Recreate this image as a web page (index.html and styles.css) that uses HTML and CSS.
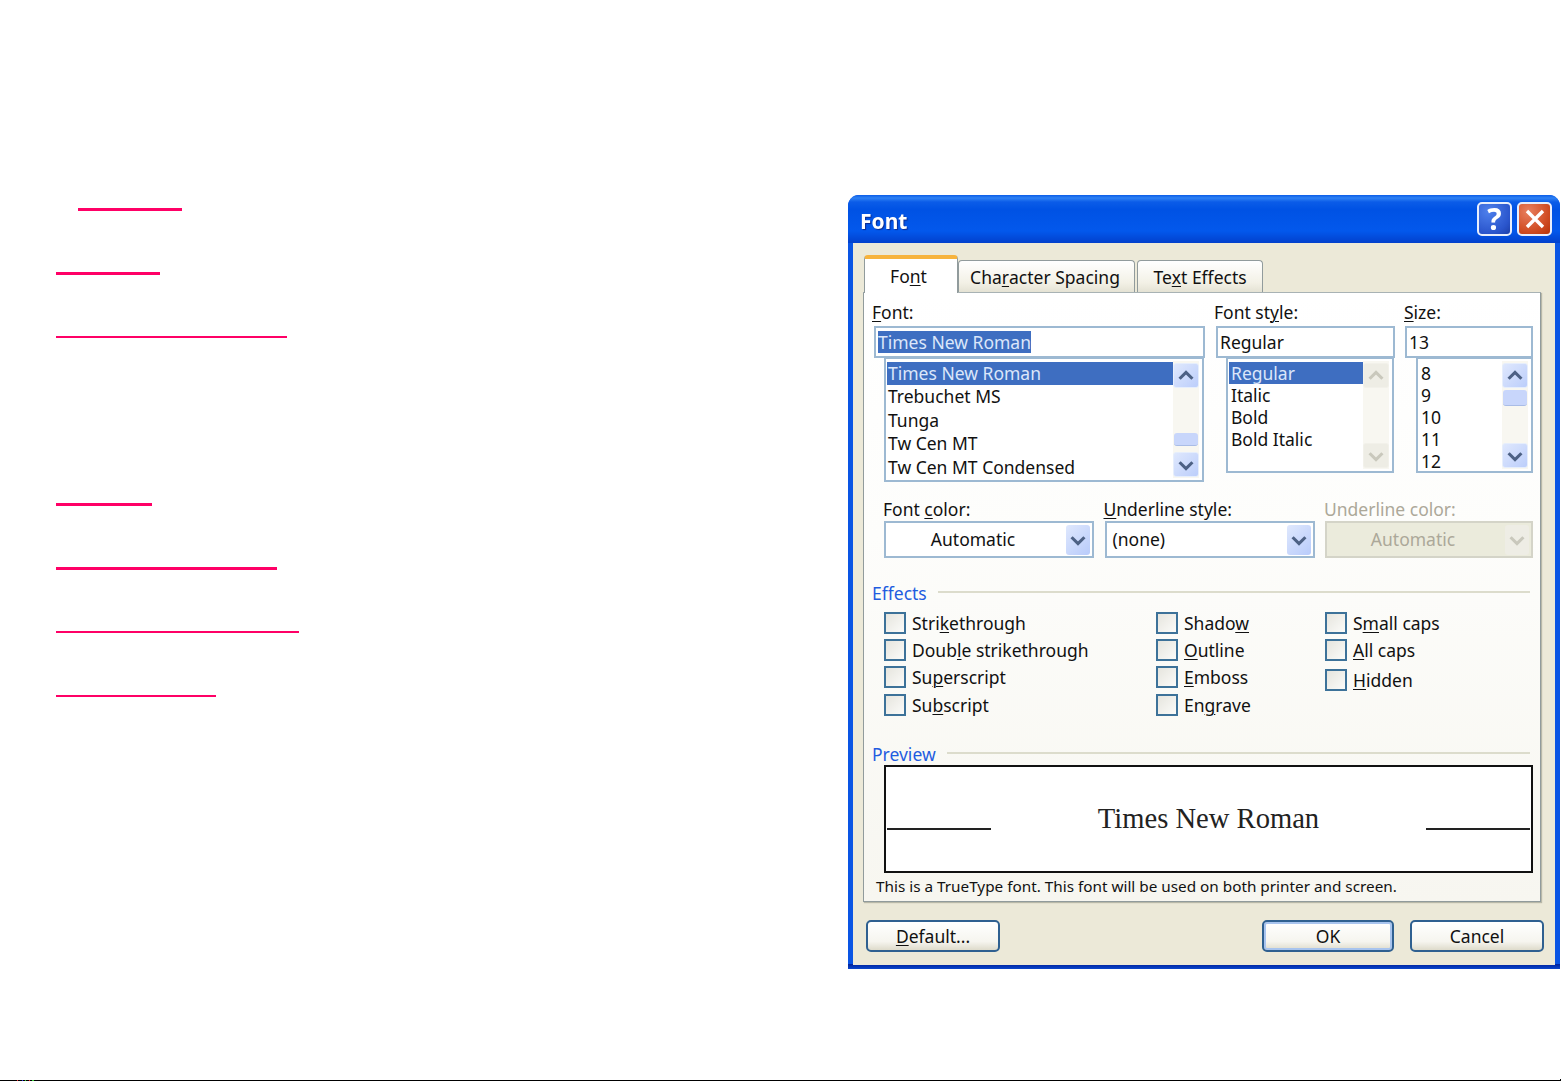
FILE: index.html
```html
<!DOCTYPE html>
<html lang="en">
<head>
<meta charset="utf-8">
<title>Font dialog</title>
<link rel="stylesheet" href="styles.css">
</head>
<body>
<svg class="defs" width="0" height="0" aria-hidden="true">
  <symbol id="up" viewBox="0 0 24 24"><path d="M5 15l7-7 7 7" fill="none" stroke="currentColor" stroke-width="3.4"/></symbol>
  <symbol id="down" viewBox="0 0 24 24"><path d="M5 9l7 7 7-7" fill="none" stroke="currentColor" stroke-width="3.4"/></symbol>
</svg>
<div class="stage">
  <div class="rules">
    <div class="rule r1"></div>
    <div class="rule r2"></div>
    <div class="rule r3"></div>
    <div class="rule r4"></div>
    <div class="rule r5"></div>
    <div class="rule r6"></div>
    <div class="rule r7"></div>
  </div>
  <div class="dialog">
    <div class="titlebar">
      <span class="title">Font</span>
      <span class="caption help">?</span>
      <span class="caption close"><svg viewBox="0 0 24 24" width="24" height="24"><path d="M4 4l16 16M20 4L4 20" stroke="#fff" stroke-width="3.4" fill="none"/></svg></span>
    </div>
    <div class="client">
      <div class="tabs">
        <div class="tab active">Fo<u>n</u>t</div>
        <div class="tab t2">Cha<u>r</u>acter Spacing</div>
        <div class="tab t3">Te<u>x</u>t Effects</div>
      </div>
      <div class="panel">
        <div class="pickers">
          <div class="col c-font">
            <div class="lbl"><u>F</u>ont:</div>
            <div class="input i-font"><span class="sel">Times New Roman</span></div>
            <div class="list l-font">
              <div class="items">
                <div class="item on">Times New Roman</div>
                <div class="item">Trebuchet MS</div>
                <div class="item">Tunga</div>
                <div class="item">Tw Cen MT</div>
                <div class="item">Tw Cen MT Condensed</div>
              </div>
              <div class="sbar">
                <div class="sb"><svg><use href="#up"/></svg></div>
                <div class="thumb th-font"></div>
                <div class="sb"><svg><use href="#down"/></svg></div>
              </div>
            </div>
          </div>
          <div class="col c-style">
            <div class="lbl">Font st<u>y</u>le:</div>
            <div class="input i-style">Regular</div>
            <div class="list l-style">
              <div class="items">
                <div class="item on">Regular</div>
                <div class="item">Italic</div>
                <div class="item">Bold</div>
                <div class="item">Bold Italic</div>
              </div>
              <div class="sbar">
                <div class="sb off"><svg><use href="#up"/></svg></div>
                <div class="sb off"><svg><use href="#down"/></svg></div>
              </div>
            </div>
          </div>
          <div class="col c-size">
            <div class="lbl"><u>S</u>ize:</div>
            <div class="input i-size">13</div>
            <div class="list l-size">
              <div class="items">
                <div class="item">8</div>
                <div class="item">9</div>
                <div class="item">10</div>
                <div class="item">11</div>
                <div class="item">12</div>
              </div>
              <div class="sbar">
                <div class="sb"><svg><use href="#up"/></svg></div>
                <div class="thumb th-size"></div>
                <div class="sb"><svg><use href="#down"/></svg></div>
              </div>
            </div>
          </div>
        </div>

        <div class="combos">
          <div class="cfield">
            <div class="lbl">Font <u>c</u>olor:</div>
            <div class="combo"><span class="cval center">Automatic</span><span class="cbtn"><svg><use href="#down"/></svg></span></div>
          </div>
          <div class="cfield">
            <div class="lbl"><u>U</u>nderline style:</div>
            <div class="combo"><span class="cval">(none)</span><span class="cbtn"><svg><use href="#down"/></svg></span></div>
          </div>
          <div class="cfield disabled">
            <div class="lbl">Underline color:</div>
            <div class="combo"><span class="cval center">Automatic</span><span class="cbtn"><svg><use href="#down"/></svg></span></div>
          </div>
        </div>

        <div class="group g-effects"><span class="gname">Effects</span><span class="gline"></span></div>
        <div class="effects">
          <div class="ecol e1">
            <div class="chk"><i></i><span>Stri<u>k</u>ethrough</span></div>
            <div class="chk"><i></i><span>Doub<u>l</u>e strikethrough</span></div>
            <div class="chk"><i></i><span>Su<u>p</u>erscript</span></div>
            <div class="chk"><i></i><span>Su<u>b</u>script</span></div>
          </div>
          <div class="ecol e2">
            <div class="chk"><i></i><span>Shado<u>w</u></span></div>
            <div class="chk"><i></i><span><u>O</u>utline</span></div>
            <div class="chk"><i></i><span><u>E</u>mboss</span></div>
            <div class="chk"><i></i><span>En<u>g</u>rave</span></div>
          </div>
          <div class="ecol e3">
            <div class="chk"><i></i><span>S<u>m</u>all caps</span></div>
            <div class="chk"><i></i><span><u>A</u>ll caps</span></div>
            <div class="chk low"><i></i><span><u>H</u>idden</span></div>
          </div>
        </div>

        <div class="group g-preview"><span class="gname">Preview</span><span class="gline"></span></div>
        <div class="preview">
          <span class="pline"></span>
          <span class="ptext">Times New Roman</span>
          <span class="pline"></span>
        </div>
        <div class="note">This is a TrueType font. This font will be used on both printer and screen.</div>
      </div>
      <div class="footer">
        <div class="btn"><u>D</u>efault...</div>
        <div class="spacer"></div>
        <div class="btn focus">OK</div>
        <div class="btn">Cancel</div>
      </div>
    </div>
  </div>
</div>
<div class="strip"></div>
</body>
</html>
```
FILE: styles.css
```css
* { box-sizing: border-box; }
html, body { margin: 0; height: 1081px; overflow: hidden; background: #fff; }
.defs { position: absolute; }
u { text-underline-offset: 2px; text-decoration-thickness: 1px; }

.stage { display: flex; height: 1080px; }
.strip {
  height: 1px; width: 1561px; position: relative;
  background: linear-gradient(90deg, #000 17px, #e33 17px 18px, #000 18px 22px, #33e 22px 23px, #000 23px 25px, #3c3 25px 26px, #000 26px 29px, #e33 29px 30px, #000 30px 32px, #3c3 32px 34px, #000 34px);
}
.strip::after { content: ""; position: absolute; right: 0; top: -1px; width: 1px; height: 1px; background: #000; }

/* pink rules */
.rules { width: 848px; padding: 208px 0 0 56px; display: flex; flex-direction: column; }
.rule { height: 3px; background: #ff0066; margin-top: 61px; }
.r1 { width: 104px; margin: 0 0 0 22px; }
.r2 { width: 104px; }
.r3 { width: 231px; height: 2px; }
.r4 { width: 96px; margin-top: 165px; }
.r5 { width: 221px; }
.r6 { width: 243px; height: 2px; margin-top: 61px; }
.r7 { width: 160px; height: 2px; margin-top: 62px; }

/* window */
.dialog {
  width: 712px; height: 774px; margin-top: 195px;
  border-radius: 11px 11px 0 0;
  background: linear-gradient(#0a55e4 769px, #00229c 769px, #0a46cc 100%);
  display: flex; flex-direction: column;
  font: 17.5px/22px "Noto Sans", "Liberation Sans", sans-serif;
  color: #111;
  filter: blur(0.5px);
}
.titlebar {
  height: 48px; flex: none; display: flex; align-items: center;
  padding: 0 8px 0 12px; gap: 5px;
  border-radius: 11px 11px 0 0;
  background: linear-gradient(#0a5ce8 0, #2f82f4 3px, #0b5ce8 7px, #0052e4 30%, #0358ec 75%, #0240cc 100%);
}
.title { flex: 1; font-size: 21px; font-weight: 700; color: #fff; text-shadow: 1px 1px 1px #0a2a90; margin-top: 3px; }
.caption {
  width: 35px; height: 34px; border: 2px solid #e8eefc; border-radius: 5px;
  display: flex; align-items: center; justify-content: center;
  color: #fff; font-size: 30px; line-height: 30px; font-weight: 700;
}
.help { background: radial-gradient(circle at 30% 25%, #4e80ec, #2a55cc 70%, #1c3ea8); }
.close { background: radial-gradient(circle at 30% 25%, #e88060, #d24f26 60%, #b83208); }

.client {
  margin: 0 5px 0 5px; height: 722px; background: #ece9d8;
  display: flex; flex-direction: column; padding: 12px 0 0 10px; flex: none;
}
.tabs { display: flex; height: 37px; align-items: flex-end; flex: none; position: relative; z-index: 1; margin-left: 1px; }
.tab {
  height: 32px; border: 1px solid #919b9c; border-bottom: 0; border-radius: 4px 4px 0 0;
  background: linear-gradient(#fff, #f3f1e6 70%, #e4e2d4);
  display: flex; align-items: center; justify-content: center;
}
.tab.active {
  width: 94px; background: #fff; border-top: 4px solid #f7b33c;
  border-bottom: 0; margin-bottom: -1px; height: 38px; padding-right: 5px;
}
.t2 { width: 177px; padding-right: 3px; }
.t3 { width: 126px; margin-left: 2px; }

.panel {
  width: 678px; height: 610px; border: 1px solid #919b9c; border-top-color: #a8b2b4;
  background: linear-gradient(#fff 0, #fdfdfb 40%, #f7f6f0 100%);
  box-shadow: 1px 1px 1px #b8b8a8;
  flex: none;
}

.pickers { display: flex; padding: 8px 0 0 8px; height: 200px; }
.col { flex: none; display: flex; flex-direction: column; }
.c-font { width: 342px; }
.c-style { width: 190px; }
.c-size { width: 129px; }
.lbl { height: 22px; margin-bottom: 3px; white-space: nowrap; }
.input {
  height: 32px; border: 2px solid #9db9d2; background: #fff; padding-left: 2px;
  display: flex; align-items: center; white-space: nowrap;
}
.i-font { width: 331px; margin-left: 2px; }
.i-style { width: 179px; margin-left: 2px; }
.i-size { width: 128px; margin-left: 1px; }
.sel { background: #3e6ec1; color: #dbe6fa; height: 22px; }

.list {
  border: 2px solid #9db9d2; border-top-width: 1px; background: #fff; display: flex;
  padding: 2px 2px 2px 1px;
}
.l-font { width: 320px; height: 124px; margin-left: 12px; }
.l-style { width: 168px; height: 115px; margin-left: 12px; }
.l-size { width: 117px; height: 115px; margin-left: 12px; }
.items { flex: 1; padding-top: 1px; }
.l-font .items { padding-top: .5px; }
.item { padding-left: 2px; white-space: nowrap; }
.l-font .item { height: 23.5px; line-height: 23.5px; padding-left: 1px; }
.l-style .item, .l-size .item { height: 22px; }
.item.on { background: #3e6ec1; color: #dbe6fa; }
.sbar {
  width: 26px; flex: none; display: flex; flex-direction: column; background: #f8f7f1;
  padding: 2px 0 1px; position: relative; margin-right: 1px;
}
.sb {
  height: 25px; flex: none; border-radius: 3px; color: #4d6185;
  background: linear-gradient(135deg, #dfe8fd, #bccefb);
  border: 1px solid #e6eefc;
  display: flex; align-items: center; justify-content: center;
}
.sb svg { width: 22px; height: 22px; }
.sb:last-child { margin-top: auto; }
.sb.off { background: #eeede5; color: #c9c8bc; border-color: #f2f1ea; }
.thumb { height: 13px; flex: none; border-radius: 3px; background: #c8d6fb; border-bottom: 1px solid #a9bce6; margin-left: 1px; margin-right: 1px; }
.th-font { margin-top: 45px; }
.th-size { height: 16px; margin-top: 2px; }

.combos { display: flex; height: 89px; padding: 5px 0 0 19px; }
.cfield { flex: none; width: 220.5px; }
.cfield .lbl { margin-bottom: 1px; }
.combo {
  width: 210px; height: 37px; border: 2px solid #9db9d2; background: #fff;
  display: flex; align-items: center; padding: 0 2px 0 6px; margin-left: 1px;
}
.cval { flex: 1; margin-top: -2px; }
.cval.center { text-align: center; padding-right: 12px; }
.cbtn {
  width: 24px; height: 30px; border-radius: 3px; color: #4d6185;
  background: linear-gradient(135deg, #dfe8fd, #b8cbfb);
  display: flex; align-items: center; justify-content: center;
}
.cbtn svg { width: 22px; height: 22px; }
.disabled { color: #aca899; }
.disabled .combo { background: #ebebdc; border-color: #d4d4c8; width: 208px; }
.disabled .cbtn { background: #eeede5; color: #c9c8bc; }

.group { display: flex; align-items: center; padding-left: 8px; height: 22px; }
.gname { color: #1f5ce0; }
.gline { flex: 1; height: 2px; background: #dcdccc; margin: -2px 10px 0 11px; }

.effects { display: flex; padding: 8px 0 0 20px; height: 139px; }
.ecol { flex: none; display: flex; flex-direction: column; gap: 5px; }
.e1 { width: 272px; }
.e2 { width: 169px; }
.chk { display: flex; align-items: center; height: 22px; white-space: nowrap; }
.chk i {
  width: 22px; height: 22px; flex: none; margin-right: 6px;
  border: 2px solid #3d7299; background: linear-gradient(135deg, #e6e5de, #fbfbf9);
}
.chk.low { margin-top: 3px; }
.e1 .chk:last-child, .e2 .chk:last-child { margin-top: 1px; }

.preview {
  width: 649px; height: 108px; margin: 0 0 0 20px; border: 2px solid #111; background: #fff;
  display: flex; align-items: center; justify-content: space-between; padding: 0 1px;
}
.ptext { font: 28.6px/34px "Liberation Serif", serif; color: #222; }
.pline { width: 104px; height: 2px; background: #222; margin-top: 20px; }
.note { padding: 2px 0 0 12px; font-size: 15.3px; white-space: nowrap; }

.footer { display: flex; gap: 16px; padding: 18px 0 0 3px; width: 681px; }
.spacer { flex: 1; }
.btn {
  width: 134px; height: 32px; border: 2px solid #2f6090; border-radius: 5px;
  background: linear-gradient(#fff, #f6f5ef 70%, #dedbcb);
  display: flex; align-items: center; justify-content: center;
}
.btn.focus { width: 132px; box-shadow: inset 0 0 0 2px #a8c4ee; }
```
